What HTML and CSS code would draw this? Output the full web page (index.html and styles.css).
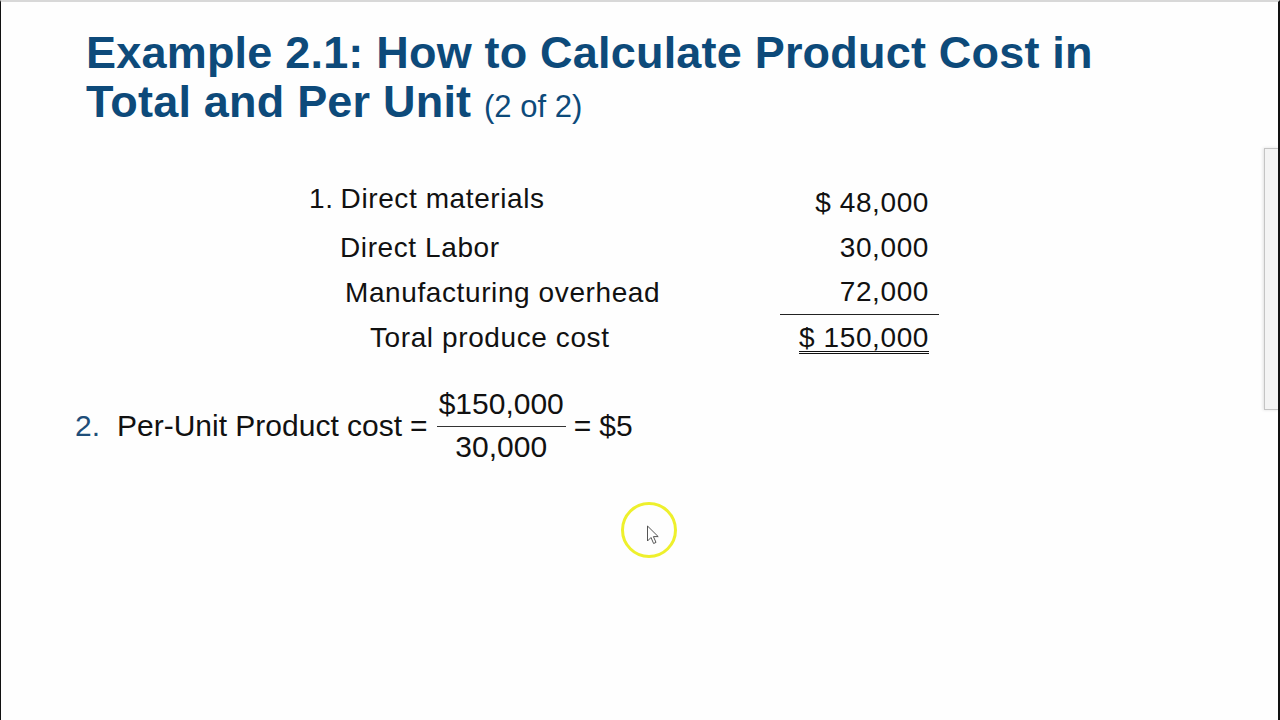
FILE: index.html
```html
<!DOCTYPE html>
<html lang="en">
<head>
<meta charset="utf-8">
<title>Example 2.1</title>
<link rel="stylesheet" href="styles.css">
</head>
<body>
<div class="slide">
  <h1 class="title">Example 2.1: How to Calculate Product Cost in<br>Total and Per Unit <span class="sub">(2 of 2)</span></h1>

  <div class="costs">
    <div class="label l1"><span class="num">1.</span>Direct materials</div>
    <div class="amt a1">$ 48,000</div>
    <div class="label l2">Direct Labor</div>
    <div class="amt">30,000</div>
    <div class="label l3">Manufacturing overhead</div>
    <div class="amt a3">72,000</div>
    <div class="label l4">Toral produce cost</div>
    <div class="amt a4"><span class="dbl">$ 150,000</span></div>
  </div>

  <div class="formula">
    <span class="fnum">2.</span>
    <span class="ftext">Per-Unit Product cost</span>
    <span class="eq">=</span>
    <span class="frac"><span class="top">$150,000</span><span class="bot">30,000</span></span>
    <span class="eq eq2">=</span>
    <span class="res">$5</span>
  </div>

  <div class="sidepanel"></div>
  <div class="cursor">
    <svg width="70" height="70" viewBox="0 0 70 70">
      <circle cx="35" cy="35" r="26.5" fill="none" stroke="#eef02c" stroke-width="3"/>
      <path d="M33.5 31 L33.5 46 L37 42.5 L39.6 48.5 L42 47.4 L39.4 41.6 L44.2 41.6 Z" fill="#fff" stroke="#555" stroke-width="1" stroke-linejoin="round"/>
    </svg>
  </div>
</div>
</body>
</html>
```

FILE: styles.css
```css
html, body {
  margin: 0;
  padding: 0;
  background: #fff;
}

.slide {
  position: relative;
  width: 1280px;
  height: 720px;
  box-sizing: border-box;
  border-left: 1px solid #111;
  border-right: 2px solid #111;
  border-top: 2px solid #d8d8d8;
  background: #fefefe;
  font-family: "Liberation Sans", Arial, sans-serif;
  color: #111;
  overflow: hidden;
}

.title {
  margin: 26px 0 0 85px;
  font-size: 45px;
  line-height: 49px;
  font-weight: bold;
  color: #0d4a7a;
  letter-spacing: 0.2px;
}

.title .sub {
  font-size: 31px;
  font-weight: normal;
  letter-spacing: 0;
}

.costs {
  display: grid;
  grid-template-columns: 471px 159px;
  grid-template-rows: 49px 45px 45px 45px;
  margin: 45px 0 0 308px;
  font-size: 28px;
  line-height: 45px;
  letter-spacing: 0.6px;
}

.label {
  white-space: nowrap;
}

.num {
  margin-right: 7px;
}

.l2 { padding-left: 31px; }
.l3 { padding-left: 36px; }
.l4 { padding-left: 61px; }

.amt {
  text-align: right;
  padding-right: 10px;
  white-space: nowrap;
}

.a1 {
  padding-top: 4px;
}

.a3 {
  border-bottom: 1px solid #222;
  box-sizing: border-box;
  line-height: 44px;
}

.dbl {
  text-decoration: underline double;
  text-underline-offset: 4px;
  text-decoration-thickness: 1px;
}

.formula {
  display: flex;
  align-items: center;
  margin: 26px 0 0 74px;
  font-size: 30px;
  letter-spacing: 0;
  white-space: nowrap;
}

.fnum {
  color: #1f4e79;
  width: 42px;
}

.eq {
  margin: 0 9px 0 8px;
}

.eq2 {
  margin: 0 8px 0 8px;
}

.frac {
  display: inline-flex;
  flex-direction: column;
  align-items: center;
}

.frac .top {
  line-height: 36px;
  padding: 0 2px 4px;
  border-bottom: 1px solid #333;
}

.frac .bot {
  line-height: 36px;
  padding-top: 2px;
}

.sidepanel {
  position: absolute;
  left: 1263px;
  top: 146px;
  width: 14px;
  height: 260px;
  border: 1px solid #c4c4c4;
  border-right: none;
  background: #f3f3f3;
  box-shadow: -1px 0 3px rgba(0,0,0,0.12);
}

.cursor {
  position: absolute;
  left: 613px;
  top: 493px;
  width: 70px;
  height: 70px;
}
```
